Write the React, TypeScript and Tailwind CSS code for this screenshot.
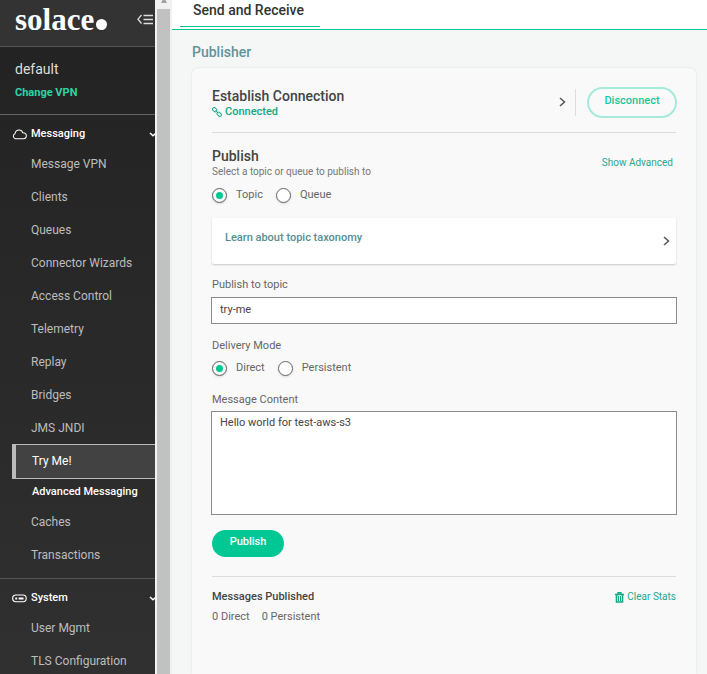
import { useState } from "react";

const messagingItems = [
  "Message VPN",
  "Clients",
  "Queues",
  "Connector Wizards",
  "Access Control",
  "Telemetry",
  "Replay",
  "Bridges",
  "JMS JNDI",
];

function Chevron({ className }: { className: string }) {
  return (
    <svg viewBox="0 0 8 12" className={className} fill="none" stroke="currentColor" strokeWidth="1.5" aria-hidden="true">
      <path d="M2 2 6.5 6 2 10" />
    </svg>
  );
}

function SmallChevron() {
  return (
    <svg viewBox="0 0 8 5" className="h-[5px] w-2 shrink-0" fill="none" stroke="#fff" strokeWidth="1.5" aria-hidden="true">
      <path d="M1 1 4 3.8 7 1" />
    </svg>
  );
}

function NavItem({ label }: { label: string }) {
  return (
    <li>
      <a href="#" className="flex h-[33px] items-center pl-[31px] text-[12px] text-[#bdbdbd]">
        {label}
      </a>
    </li>
  );
}

function Radio({ name, label, checked, onChange }: { name: string; label: string; checked: boolean; onChange: () => void }) {
  return (
    <label className="flex items-center gap-[9px]">
      <input
        type="radio"
        name={name}
        checked={checked}
        onChange={onChange}
        className="size-[15px] appearance-none rounded-full border border-[#666] bg-white p-[3px] shadow-sm checked:bg-[#00c895] checked:bg-clip-content"
      />
      {label}
    </label>
  );
}

function Sidebar() {
  return (
    <nav className="w-[155px] shrink-0 overflow-hidden bg-linear-to-b from-[#222] to-[#303030]">
      <header className="flex h-[47px] items-start justify-between border-b border-[#555] bg-[#333] pl-[15px]">
        <div className="flex items-baseline gap-[2px] text-white">
          <span className="font-['Liberation_Serif',serif] text-[31px] leading-[39px] font-bold">solace</span>
          <span className="size-[11px] rounded-full bg-white" />
        </div>
        <button type="button" aria-label="Collapse menu" className="mt-[14px] mr-[2px]">
          <svg viewBox="0 0 16 11" className="h-[11px] w-4" fill="none" stroke="#ddd" strokeWidth="1.3" aria-hidden="true">
            <path d="M4.5 1 1 5.2 4.5 9.5M6.5 1.5H16M6.5 5.5H16M6.5 9.5H16" />
          </svg>
        </button>
      </header>
      <div className="h-[68px] border-b border-[#666] pt-3 pl-[15px]">
        <p className="text-[14px] leading-5 text-[#ddd]">default</p>
        <a href="#" className="mt-1 block text-[11px] leading-5 font-bold text-[#2bd4a4]">Change VPN</a>
      </div>
      <section>
        <button type="button" className="flex h-8 w-[157px] items-center pt-[6px] pl-3 text-[11px] font-medium text-white">
          <svg viewBox="0 0 16 11" className="mr-1 h-[11px] w-[15px]" fill="none" stroke="#fff" strokeWidth="1.1" aria-hidden="true">
            <path d="M3.5 10A2.8 2.8 0 0 1 3.2 4.7C3.7 2.2 5.4.8 7.6.8c2 0 3.3 1 3.9 2.8 2.2 0 3.8 1.3 3.8 3.2S14 10 12 10Z" />
          </svg>
          <span className="flex-1 text-left">Messaging</span>
          <SmallChevron />
        </button>
        <ul>
          {messagingItems.map((item) => (
            <NavItem key={item} label={item} />
          ))}
        </ul>
        <a href="#" className="ml-3 flex h-[35px] items-center border-y border-l-4 border-[#bbb] bg-[#424242] pb-[2px] pl-4 text-[12px] text-white">
          Try Me!
        </a>
        <p className="flex h-[26px] items-center pl-8 text-[11px] font-medium text-white">Advanced Messaging</p>
        <ul className="border-b border-[#555] pb-[7px]">
          <NavItem label="Caches" />
          <NavItem label="Transactions" />
        </ul>
      </section>
      <section>
        <button type="button" className="flex h-8 w-[157px] items-center pt-[6px] pl-3 text-[11px] font-medium text-white">
          <svg viewBox="0 0 16 9" className="mr-1 h-[9px] w-[15px]" fill="none" stroke="#fff" strokeWidth="1.2" aria-hidden="true">
            <rect x=".7" y=".8" width="14.4" height="7.2" rx="3.4" />
            <path d="M3.5 4.5H5.5M7 4.5H12.3" strokeWidth="2" />
          </svg>
          <span className="flex-1 text-left">System</span>
          <SmallChevron />
        </button>
        <ul>
          <NavItem label="User Mgmt" />
          <NavItem label="TLS Configuration" />
        </ul>
      </section>
    </nav>
  );
}

function Publisher() {
  const [target, setTarget] = useState("topic");
  const [mode, setMode] = useState("direct");
  return (
    <section className="px-5 text-[11px] text-[#666]">
      <div className="flex h-[65px] items-center border-b border-[#ddd] pt-1">
        <div className="flex-1">
          <h3 className="text-[14px] leading-5 font-medium text-[#444]">Establish Connection</h3>
          <p className="flex items-center gap-[3px] text-[11px] leading-3 font-medium text-[#12a886]">
            <svg viewBox="0 0 10 10" className="size-[10px]" fill="none" stroke="currentColor" strokeWidth="1" aria-hidden="true">
              <rect x="-2.4" y="-1.6" width="4.8" height="3.2" rx="1.6" transform="translate(2.7 2.7) rotate(45)" />
              <rect x="-2.4" y="-1.6" width="4.8" height="3.2" rx="1.6" transform="translate(7.2 7.2) rotate(45)" />
              <path d="M3.6 3.6 6.3 6.3" />
            </svg>
            Connected
          </p>
        </div>
        <button type="button" aria-label="Expand connection" className="pr-[9px]">
          <Chevron className="h-3 w-2 text-[#555]" />
        </button>
        <div className="mr-[11px] h-[27px] border-l border-[#ddd]" />
        <button type="button" className="-mr-px h-[31px] w-[90px] rounded-full border-2 border-[#a6ebd9] pb-px text-[11px] font-medium text-[#12c99b]">
          Disconnect
        </button>
      </div>

      <div className="flex items-start justify-between pt-[13px]">
        <div>
          <h3 className="text-[14px] leading-5 font-medium text-[#444]">Publish</h3>
          <p className="text-[10px] leading-3 text-[#777]">Select a topic or queue to publish to</p>
        </div>
        <a href="#" className="mt-[9px] mr-[3px] text-[10px] leading-4 text-[#2aa68c]">Show Advanced</a>
      </div>
      <div className="mt-[7px] flex h-5 gap-[13px]">
        <Radio name="target" label="Topic" checked={target === "topic"} onChange={() => setTarget("topic")} />
        <Radio name="target" label="Queue" checked={target === "queue"} onChange={() => setTarget("queue")} />
      </div>

      <button type="button" className="mt-[13px] flex h-[46px] w-full items-center justify-between rounded-xs bg-white pr-[6px] pl-[13px] shadow-[0_1px_2px_#0003]">
        <span className="pb-[5px] text-[11px] font-medium text-[#558f93]">Learn about topic taxonomy</span>
        <Chevron className="h-3 w-2 text-[#555]" />
      </button>

      <label htmlFor="topic" className="mt-[13px] block leading-4">Publish to topic</label>
      <div className="-mx-px mt-1">
        <input id="topic" defaultValue="try-me" className="block h-[27px] w-full border border-[#8c8c8c] bg-white px-2 pb-[2px] text-[11px] text-[#444]" />
      </div>

      <fieldset>
        <legend className="pt-[14px] leading-4">Delivery Mode</legend>
        <div className="mt-1 flex h-5 gap-[13px]">
          <Radio name="mode" label="Direct" checked={mode === "direct"} onChange={() => setMode("direct")} />
          <Radio name="mode" label="Persistent" checked={mode === "persistent"} onChange={() => setMode("persistent")} />
        </div>
      </fieldset>

      <label htmlFor="content" className="mt-[14px] block leading-4">Message Content</label>
      <div className="-mx-px mt-[3px]">
        <textarea id="content" defaultValue="Hello world for test-aws-s3" className="block h-[104px] w-full resize-none border border-[#8c8c8c] bg-white px-2 pt-[3px] text-[11px] leading-4 text-[#444]" />
      </div>

      <button type="button" className="mt-[15px] block h-[27px] w-[72px] rounded-full bg-[#00c895] pb-[2px] text-[11px] font-medium text-white">
        Publish
      </button>

      <div className="mt-[19px] flex items-start justify-between border-t border-[#ddd] pt-3">
        <div>
          <h4 className="text-[11px] leading-4 font-medium text-[#444]">Messages Published</h4>
          <p className="mt-1 flex gap-3 leading-4">
            <span>0 Direct</span>
            <span>0 Persistent</span>
          </p>
        </div>
        <button type="button" className="flex items-center gap-[3px] text-[10px] leading-4 text-[#2aa68c]">
          <svg viewBox="0 0 9 11" className="h-[11px] w-[9px]" fill="none" stroke="#12a886" aria-hidden="true">
            <path d="M0 2.5H9M3 2V.7H6V2" strokeWidth="1.4" />
            <path d="M1.5 3V10H7.5V3" strokeWidth="1.6" />
            <path d="M3.5 4V9M5.5 4V9" />
          </svg>
          Clear Stats
        </button>
      </div>
    </section>
  );
}

export default function App() {
  return (
    <div className="flex h-screen overflow-hidden bg-[#f5f7f7] font-[Roboto,sans-serif]">
      <Sidebar />
      <div className="flex w-[17px] shrink-0 flex-col items-center bg-[#f1f1f1]" aria-hidden="true">
        <svg viewBox="0 0 8 4" className="h-[3px] w-2" fill="#a3a3a3">
          <path d="M2 0H6L8 4H0Z" />
        </svg>
        <div className="mt-[6px] w-[13px] flex-1 bg-[#c1c1c1]" />
      </div>
      <main className="flex min-w-0 flex-1 flex-col">
        <div className="h-[30px] border-b border-[#00c895] bg-white pl-2">
          <button type="button" className="block h-[27px] w-[140px] border-b border-[#00c895] pr-2 pb-[6px] pl-[13px] text-left text-[14px] leading-5 font-medium whitespace-nowrap text-[#333]">
            Send and Receive
          </button>
        </div>
        <h2 className="pt-3 pl-5 text-[14px] leading-5 font-medium text-[#5f9497]">Publisher</h2>
        <div className="mt-[6px] mr-[11px] ml-5 flex-1 rounded-t-md bg-[#f9f9f9] shadow-[0_0_2px_#0002]">
          <Publisher />
        </div>
      </main>
    </div>
  );
}
